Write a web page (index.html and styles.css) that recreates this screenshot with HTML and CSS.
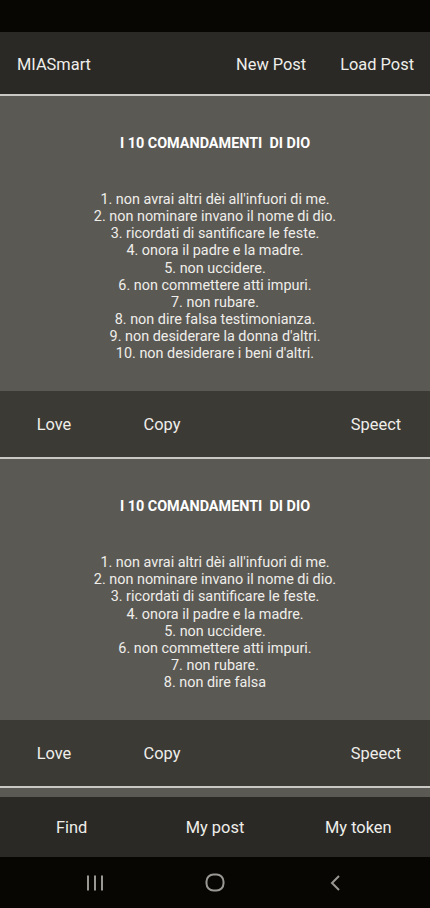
FILE: index.html
```html
<!DOCTYPE html>
<html lang="it">
<head>
    <meta charset="UTF-8">
    <meta name="viewport" content="width=device-width, initial-scale=1.0">
    <title>MIASmart</title>
    <link rel="stylesheet" href="styles.css">
</head>
<body>
    <div class="app">
        <div class="status-bar"></div>

        <header class="top-bar">
            <span class="brand">MIASmart</span>
            <nav class="top-actions">
                <button>New Post</button>
                <button>Load Post</button>
            </nav>
        </header>

        <main class="feed">
            <article class="post">
                <div class="post-body">
                    <h2 class="post-title">I 10 COMANDAMENTI  DI DIO</h2>
                    <p class="post-text">1. non avrai altri dèi all'infuori di me.<br>
2. non nominare invano il nome di dio.<br>
3. ricordati di santificare le feste.<br>
4. onora il padre e la madre.<br>
5. non uccidere.<br>
6. non commettere atti impuri.<br>
7. non rubare.<br>
8. non dire falsa testimonianza.<br>
9. non desiderare la donna d'altri.<br>
10. non desiderare i beni d'altri.</p>
                </div>
                <div class="post-actions">
                    <button>Love</button>
                    <button>Copy</button>
                    <button class="push">Speect</button>
                </div>
            </article>

            <article class="post">
                <div class="post-body">
                    <h2 class="post-title">I 10 COMANDAMENTI  DI DIO</h2>
                    <p class="post-text">1. non avrai altri dèi all'infuori di me.<br>
2. non nominare invano il nome di dio.<br>
3. ricordati di santificare le feste.<br>
4. onora il padre e la madre.<br>
5. non uccidere.<br>
6. non commettere atti impuri.<br>
7. non rubare.<br>
8. non dire falsa</p>
                </div>
                <div class="post-actions">
                    <button>Love</button>
                    <button>Copy</button>
                    <button class="push">Speect</button>
                </div>
            </article>

            <article class="post">
                <div class="post-body"></div>
            </article>
        </main>

        <nav class="bottom-nav">
            <button>Find</button>
            <button>My post</button>
            <button>My token</button>
        </nav>

        <div class="system-nav">
            <span class="sys-btn">
                <svg width="18" height="18" viewBox="0 0 18 18">
                    <path d="M2 1.5v15M9 1.5v15M16 1.5v15" stroke="#9a9893" stroke-width="2" fill="none"/>
                </svg>
            </span>
            <span class="sys-btn">
                <svg width="20" height="19" viewBox="0 0 20 19">
                    <rect x="1.5" y="1.5" width="17" height="16" rx="7" stroke="#9a9893" stroke-width="2" fill="none"/>
                </svg>
            </span>
            <span class="sys-btn">
                <svg width="12" height="16" viewBox="0 0 12 16">
                    <path d="M10 1L3 8l7 7" stroke="#9a9893" stroke-width="2" fill="none"/>
                </svg>
            </span>
        </div>
    </div>
</body>
</html>
```

FILE: styles.css
```css
* {
    margin: 0;
    padding: 0;
    box-sizing: border-box;
}

body {
    background: #080602;
    font-family: Roboto, 'Noto Sans', sans-serif;
    color: #efeeea;
}

button {
    background: none;
    border: none;
    color: inherit;
    font: inherit;
    cursor: pointer;
}

.app {
    height: 908px;
    display: flex;
    flex-direction: column;
    overflow: hidden;
}

.status-bar {
    height: 32px;
    background: #080602;
    flex-shrink: 0;
}

.top-bar {
    height: 64px;
    display: flex;
    align-items: center;
    padding: 2px 16px 0 17px;
    background: #2a2925;
    border-bottom: 2px solid #c9c8c4;
    font-size: 16.4px;
    flex-shrink: 0;
}

.brand {
    flex: 1;
}

.top-actions {
    display: flex;
    gap: 34px;
}

.feed {
    flex: 1;
    overflow: hidden;
    background: #5b5954;
}

.post {
    border-bottom: 2px solid #c9c8c4;
}

.post-body {
    background: #5b5954;
    text-align: center;
    padding: 40px 12px 28.5px;
}

.post-title {
    font-size: 14.4px;
    font-weight: 700;
    line-height: 16px;
    color: #ffffff;
    white-space: pre;
    margin-bottom: 39px;
}

.post-text {
    font-size: 14.4px;
    line-height: 17.15px;
}

.post-actions {
    height: 66px;
    display: flex;
    align-items: center;
    padding-top: 1px;
    background: #3c3a35;
    font-size: 16.4px;
}

.post-actions button {
    width: 108px;
    height: 100%;
}

.post-actions .push {
    margin-left: auto;
}

.bottom-nav {
    height: 60px;
    display: grid;
    grid-template-columns: repeat(3, 1fr);
    background: #2a2925;
    font-size: 16.4px;
    flex-shrink: 0;
}

.system-nav {
    height: 51px;
    display: grid;
    grid-template-columns: repeat(3, 120px);
    padding: 0 35px;
    align-items: center;
    background: #080602;
    flex-shrink: 0;
}

.sys-btn {
    display: flex;
    justify-content: center;
    align-items: center;
}
```
